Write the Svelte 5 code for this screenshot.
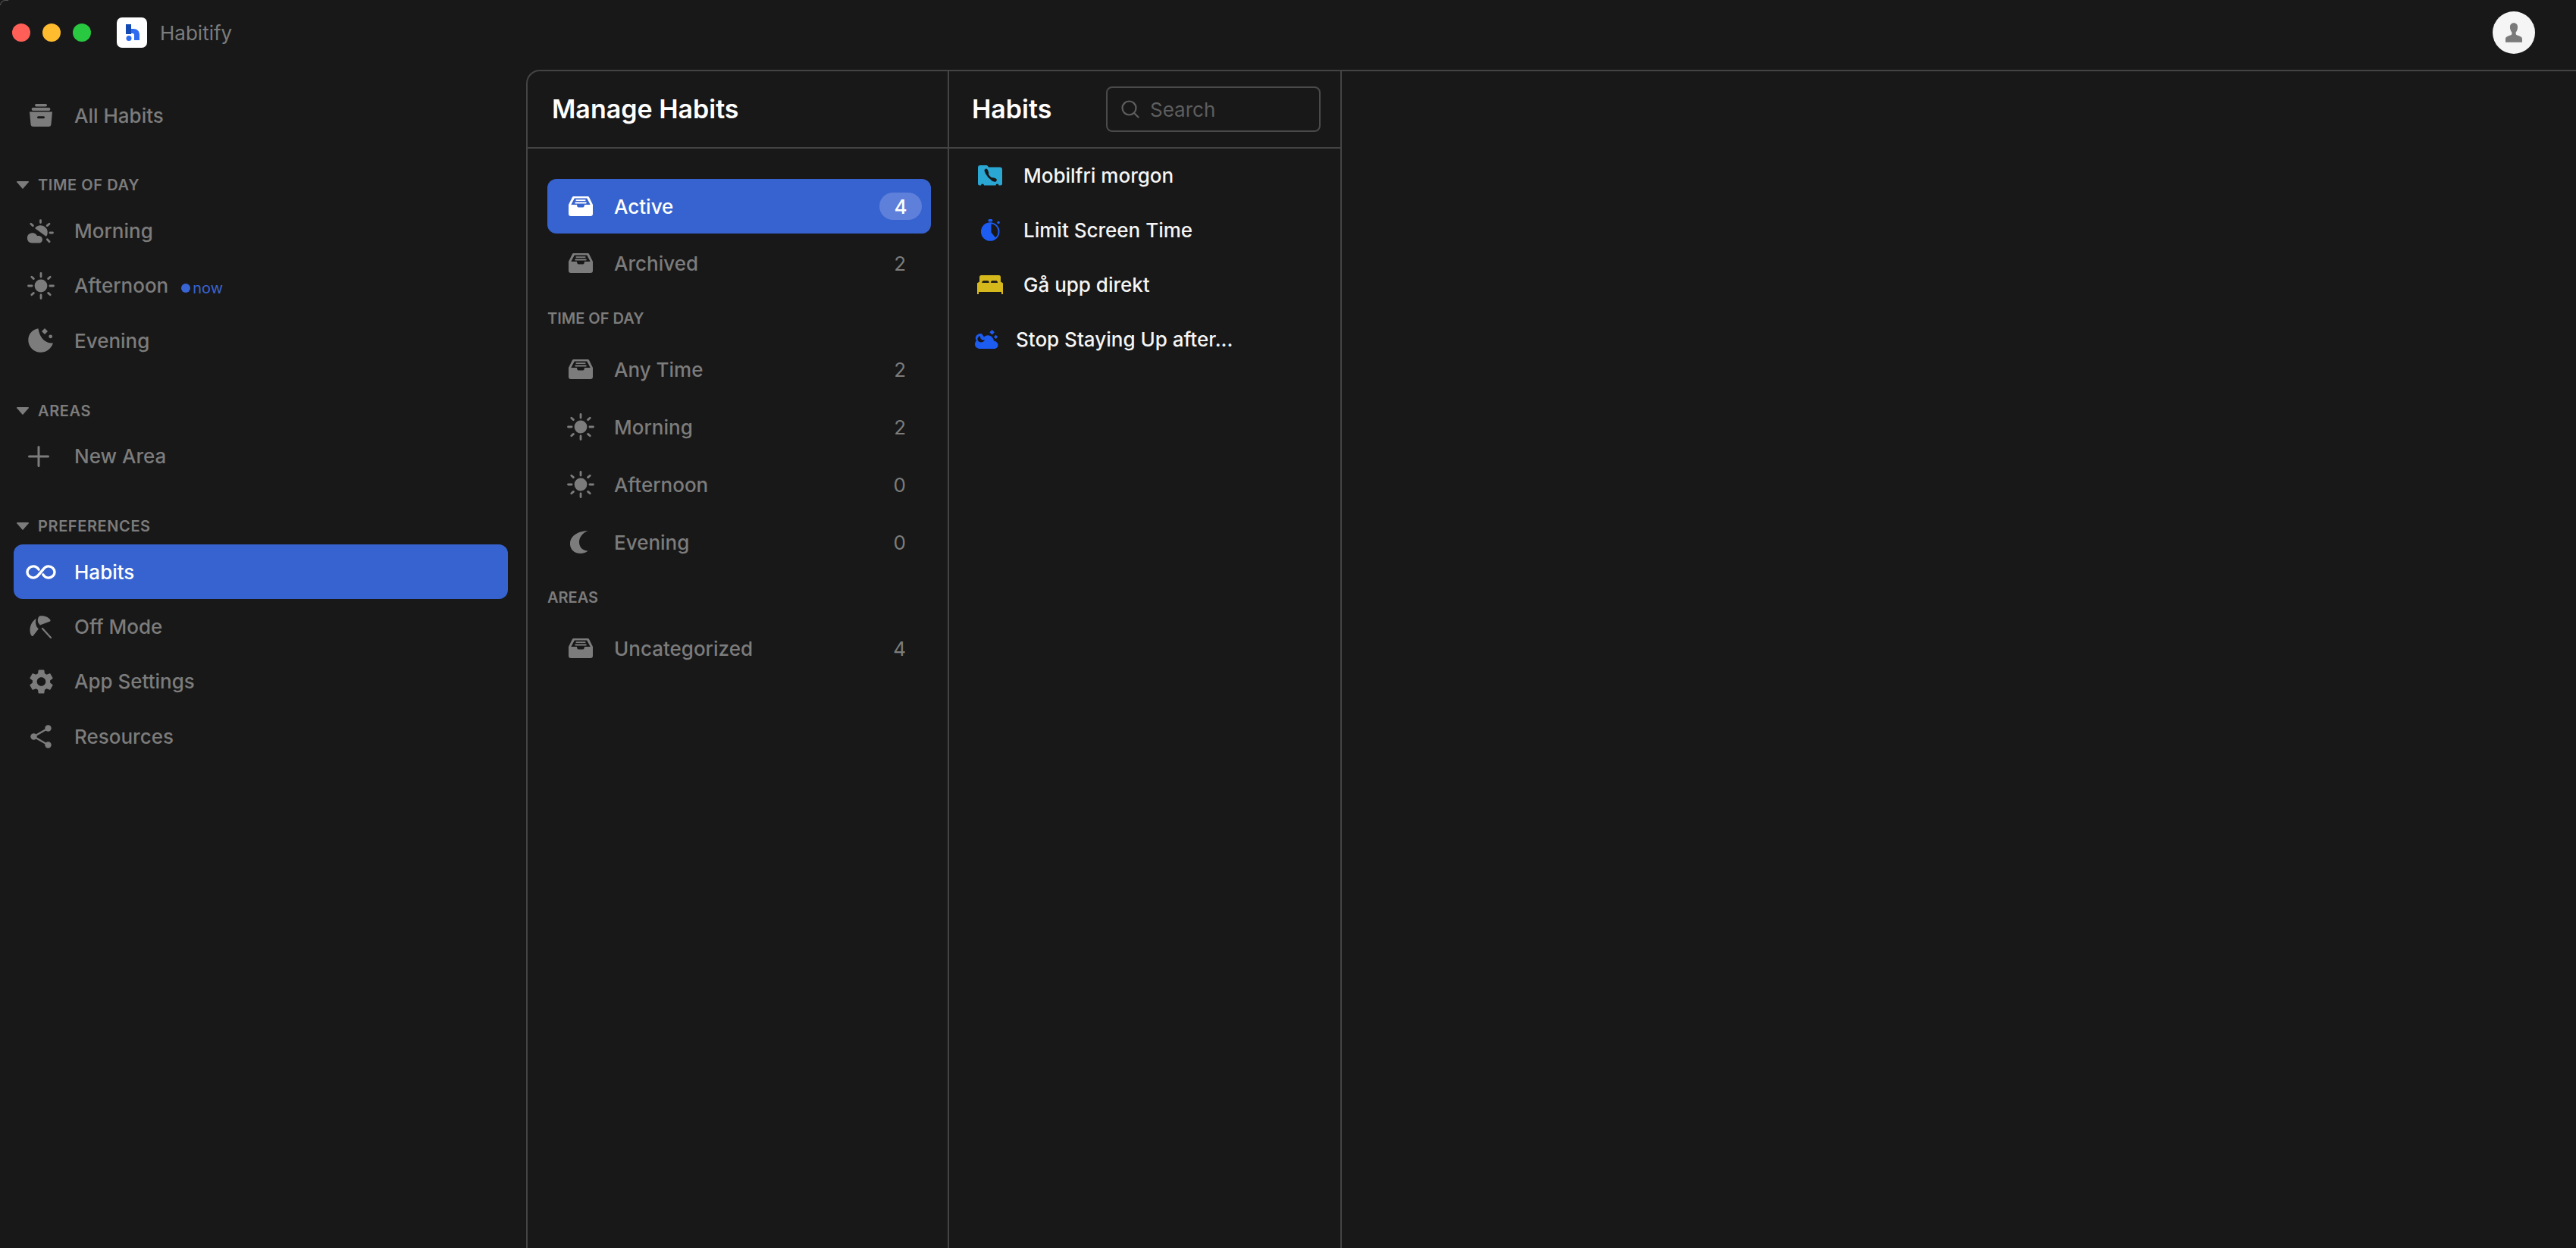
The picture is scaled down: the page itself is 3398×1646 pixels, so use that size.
<script>
  const timeRows = [
    { label: 'Any Time', icon: 'tray', count: 2 },
    { label: 'Morning', icon: 'sun', count: 2 },
    { label: 'Afternoon', icon: 'sun', count: 0 },
    { label: 'Evening', icon: 'moon', count: 0 }
  ];
</script>

{#snippet icon(name)}
  {#if name === 'archive'}
    <svg width="30" height="30" viewBox="0 0 30 30" fill="currentColor">
      <rect x="7" y="0" width="16" height="3.4" rx="1.7" />
      <rect x="2.6" y="5" width="24.8" height="4" rx="2" />
      <path fill-rule="evenodd" d="M0 10.5h30l-1.6 17a2.8 2.8 0 0 1-2.8 2.5H4.4a2.8 2.8 0 0 1-2.8-2.5zM11.5 16.2a1.5 1.5 0 0 0 0 3h7a1.5 1.5 0 0 0 0-3z" />
    </svg>
  {:else if name === 'sunrise'}
    <svg width="36" height="32" viewBox="0 0 36 32" fill="currentColor">
      <g stroke="currentColor" stroke-width="2.8" stroke-linecap="round" fill="none">
        <path d="M17.5 1.600v3M4.800 6.200l2.600 2.400M29 6.200l-2.800 2.400M30 18h3.500M26.300 26.800l2.800 3" />
      </g>
      <path d="M10 12A9.300 9.300 0 0 1 25 23Z" />
      <path d="M6 31.500a6.600 6.600 0 0 1-1-13c3.500-.8 6.500.5 8 3.500 4-.5 7 1.500 7 5 0 2.500-2 4.500-4.500 4.500z" />
    </svg>
  {:else if name === 'sun'}
    <svg width="36" height="36" viewBox="0 0 36 36" fill="currentColor">
      <circle cx="18" cy="18" r="8.4" />
      <g stroke="currentColor" stroke-width="2.8" stroke-linecap="round">
        <path d="M18 1.500v4.600M18 29.900v4.600M1.500 18h4.600M29.900 18h4.600M5.800 6.200l2.600 2.400M30.200 6.200l-2.600 2.400M5.800 29.800l2.600-2.400M30.200 29.800l-2.600-2.400" />
      </g>
    </svg>
  {:else if name === 'phase'}
    <svg width="34" height="33" viewBox="0 0 34 33" fill="currentColor">
      <path d="M13.500.3C5 2 .3 8 .3 15.500.3 24.500 7.500 31.800 16.500 31.800c7.500 0 14-4.800 16.500-12.300-9 1-17.500-5.500-19.500-19.200z" />
      <path d="M22 0l4 4-4 4-4-4z" />
      <circle cx="29.700" cy="10.800" r="2.400" />
    </svg>
  {:else if name === 'moon'}
    <svg width="28" height="30" viewBox="0 0 28 30" fill="currentColor">
      <path d="M23.500 0C12 .5 3 5 .5 13c-2.500 9 3.500 17 13 17 4 0 8-1.500 10-3.500-7 0-11.500-5-11.500-11.500C12 9 16 3 23.500 0z" />
    </svg>
  {:else if name === 'plus'}
    <svg class="plus" width="28" height="28" viewBox="0 0 28 28" fill="none" stroke="currentColor" stroke-width="3" stroke-linecap="round">
      <path d="M14 1.500v25M1.500 14h25" />
    </svg>
  {:else if name === 'infinity'}
    <svg width="40" height="19" viewBox="0 0 42 20" fill="none" stroke="currentColor" stroke-width="3.600" stroke-linecap="round">
      <path d="M18 6.500C16 3.500 13.500 2 10.500 2 5.800 2 2 5.600 2 10s3.800 8 8.500 8c3.500 0 5.800-2 8-5l5-6c2.200-3 4.500-5 8-5C36.200 2 40 5.600 40 10s-3.800 8-8.500 8c-3 0-5.500-1.500-7.500-4.500" />
    </svg>
  {:else if name === 'umbrella'}
    <svg width="30" height="30" viewBox="0 0 30 30" fill="currentColor">
      <path d="M13 .6c4-1.200 11.500.3 14.300 5 .6 1 .2 1.800-.8 2.100L13.800 12.500 11.200 9C10.400 5.800 10.800 2.800 13 .6z" />
      <path d="M8.800 3.800C7.500 7.500 7.800 11 9.400 14.400l2.400 3L4.800 26.500c-.5.700-1.300.8-1.900.2C-1.200 22.400-.5 9.500 8.800 3.800z" />
      <path d="M17 17l11 12" fill="none" stroke="currentColor" stroke-width="2.200" stroke-linecap="round" />
    </svg>
  {:else if name === 'gear'}
    <svg width="33" height="34" viewBox="2.400 1.500 19.200 21" fill="currentColor">
      <path d="M19.140 12.940c.04-.3.06-.61.06-.94 0-.32-.02-.64-.07-.94l2.030-1.580c.18-.14.23-.41.12-.61l-1.920-3.320c-.12-.22-.37-.29-.59-.22l-2.390.96c-.5-.38-1.030-.7-1.620-.94l-.36-2.540c-.04-.24-.24-.41-.48-.41h-3.840c-.24 0-.43.17-.47.41l-.36 2.540c-.59.24-1.130.57-1.620.94l-2.390-.96c-.22-.08-.47 0-.59.22L2.740 8.870c-.12.21-.08.47.12.61l2.030 1.580c-.05.3-.09.63-.09.94s.02.64.07.94l-2.030 1.580c-.18.14-.23.41-.12.61l1.920 3.320c.12.22.37.29.59.22l2.390-.96c.5.38 1.030.7 1.620.94l.36 2.540c.05.24.24.41.48.41h3.840c.24 0 .44-.17.47-.41l.36-2.540c.59-.24 1.130-.56 1.620-.94l2.390.96c.22.08.47 0 .59-.22l1.920-3.320c.12-.22.07-.47-.12-.61l-2.010-1.580zM12 15.600c-1.980 0-3.600-1.620-3.600-3.600s1.620-3.600 3.600-3.600 3.600 1.620 3.600 3.600-1.620 3.600-3.600 3.600z" />
    </svg>
  {:else if name === 'share'}
    <svg width="28" height="31" viewBox="0 0 28 31" fill="currentColor">
      <circle cx="23.500" cy="4.500" r="4.200" />
      <circle cx="4.500" cy="15.500" r="4.200" />
      <circle cx="23.500" cy="26.500" r="4.200" />
      <path d="M23.500 4.500L4.500 15.500l19 11" fill="none" stroke="currentColor" stroke-width="2.400" />
    </svg>
  {:else if name === 'tray'}
    <svg width="32" height="26" viewBox="0 0 32 26" fill="currentColor">
      <path fill-rule="evenodd" d="M7 0h18c1 0 1.800.5 2.300 1.400L32 11v12a3 3 0 0 1-3 3H3a3 3 0 0 1-3-3V11L4.700 1.400C5.200.5 6 0 7 0zm.8 2.400L3.300 11H11c0 2 .8 3.400 2 3.400h6c1.200 0 2-1.400 2-3.400h7.700L24.200 2.400z" />
      <rect x="9.400" y="4.200" width="13.200" height="1.800" rx=".9" />
      <rect x="8.300" y="7.600" width="15.400" height="1.800" rx=".9" />
    </svg>
  {:else if name === 'phone'}
    <svg width="32" height="27" viewBox="0 0 32 27" fill="#2aa7d3">
      <path d="M0 3a3 3 0 0 1 3-3h8c1 0 1.500.5 2 1l1 1.500h15a3 3 0 0 1 3 3V24a2.500 2.500 0 0 1-2.500 2.500h-2a2 2 0 0 0-4 0H8a2 2 0 0 0-4 0H2.500A2.500 2.500 0 0 1 0 24z" />
      <g fill="none" stroke="#181818" stroke-linecap="round">
        <path d="M11.500 8c.5 5.500 4.500 10 10.500 11.500" stroke-width="2.800" />
        <path d="M10.800 7l1.200 3" stroke-width="4.600" />
        <path d="M19.500 18.500l3 1" stroke-width="4.600" />
      </g>
    </svg>
  {:else if name === 'timer'}
    <svg width="25" height="29" viewBox="0 0 25 29" fill="#1d5cf0">
      <rect x="9.400" y="0" width="6" height="3.400" rx="1.700" />
      <circle cx="23" cy="4.500" r="1.800" />
      <path fill-rule="evenodd" d="M12.200 4.200a12.300 12.300 0 1 1 0 24.600 12.300 12.300 0 0 1 0-24.600zM13.500 6.300v11.200l5.500 6.700A10.300 10.300 0 0 0 13.500 6.300z" />
    </svg>
  {:else if name === 'bed'}
    <svg width="34" height="25" viewBox="0 0 34 25" fill="#d5b91c">
      <path d="M3 2.500A2.500 2.500 0 0 1 5.500 0h23A2.500 2.500 0 0 1 31 2.500V8.500l3 2V22H0V10.500l3-2z" />
      <rect x="0" y="22" width="2" height="3" />
      <rect x="32" y="22" width="2" height="3" />
      <path d="M6.300 10c0-1.700 1-2.700 2.400-2.700h5.200c1.200 0 1.800 1 1.800 2.700zM18 10c0-1.700.7-2.700 1.900-2.700h5.200c1.400 0 1.900 1 1.900 2.700z" fill="#181818" />
    </svg>
  {:else if name === 'cloudmoon'}
    <svg width="31" height="25" viewBox="0 0 31 25" fill="#1d5cf0">
      <path d="M22.600 0l3.300 3.300-3.300 3.300-3.300-3.300z" />
      <path d="M27.600 6.700l2.600 2.600-2.600 2.600-2.600-2.600z" />
      <path fill-rule="evenodd" d="M7 25c-4 0-7-2.500-7-6 0-2 .8-3.500 2-4.500-1-1.500-1.500-3.500-1-5C2 6.500 4.500 5 7.500 5c1.500 0 2 .5 2.500 1.500l2 3c1.500-1.500 4-2.500 6.500-2 3.500.5 6 3.500 6.500 7 3 .5 5.500 3 5.500 5.500 0 3-2.500 5-5.500 5zM7 8c-3.500 1-4.500 4.500-2.500 7 2.500 2.500 7 1.500 8.500-1.500C9 14 6.500 11.500 7 8z" />
    </svg>
  {/if}
{/snippet}

{#snippet navRow(name, label, active = false)}
  <div class="nav-row" class:active>
    <span class="nav-icon">{@render icon(name)}</span>
    <span>{label}</span>
  </div>
{/snippet}

{#snippet navHead(label)}
  <div class="nav-head">
    <svg width="16" height="10" viewBox="0 0 16 10" fill="currentColor"><path d="M.8 0h14.400c.6 0 1 .7.6 1.200L8.600 9.600a.8.8 0 0 1-1.200 0L.2 1.200C-.2.700.2 0 .8 0z" /></svg>
    <span>{label}</span>
  </div>
{/snippet}

{#snippet countRow(name, label, count)}
  <div class="count-row">
    <span class="count-icon">{@render icon(name)}</span>
    <span class="count-label">{label}</span>
    <span class="count">{count}</span>
  </div>
{/snippet}

<div class="window">
  <header class="titlebar">
    <div class="lights">
      <span class="light red"></span>
      <span class="light yellow"></span>
      <span class="light green"></span>
    </div>
    <div class="logo">
      <svg width="40" height="40" viewBox="0 0 40 40">
        <path d="M12 9h7v13h-7z" fill="#1249b4" />
        <path d="M19 15h3c5 0 8 3 8 8v7h-7v-7c0-1.300-.8-2-2-2h-2z" fill="#2f6bf0" />
        <circle cx="16" cy="27.500" r="3.500" fill="#2f6bf0" />
      </svg>
    </div>
    <span class="app-name">Habitify</span>
    <div class="avatar">
      <svg width="22" height="26" viewBox="0 0 24 28" fill="#7a7a7a">
        <path d="M12 0c3.500 0 5.500 2.500 5.500 6 0 3-1 5.500-2.600 7.500v2.200c0 1 .6 1.600 2.600 2.300 3.500 1.100 6.500 2 6.500 5V28H0v-5c0-3 3-3.900 6.500-5 2-.7 2.600-1.300 2.600-2.300v-2.200C7.500 11.500 6.500 9 6.500 6 6.500 2.500 8.500 0 12 0z" />
      </svg>
    </div>
  </header>

  <div class="body">
    <nav class="sidebar">
      {@render navRow('archive', 'All Habits')}

      {@render navHead('TIME OF DAY')}
      {@render navRow('sunrise', 'Morning')}
      <div class="nav-row">
        <span class="nav-icon">{@render icon('sun')}</span>
        <span>Afternoon</span>
        <span class="now"><i></i>now</span>
      </div>
      {@render navRow('phase', 'Evening')}

      {@render navHead('AREAS')}
      {@render navRow('plus', 'New Area')}

      {@render navHead('PREFERENCES')}
      {@render navRow('infinity', 'Habits', true)}
      {@render navRow('umbrella', 'Off Mode')}
      {@render navRow('gear', 'App Settings')}
      {@render navRow('share', 'Resources')}
    </nav>

    <main class="panel">
      <section class="manage">
        <div class="col-head"><h1>Manage Habits</h1></div>
        <div class="manage-list">
          <div class="count-row selected">
            <span class="count-icon">{@render icon('tray')}</span>
            <span class="count-label">Active</span>
            <span class="badge">4</span>
          </div>
          {@render countRow('tray', 'Archived', 2)}

          <div class="group-label">TIME OF DAY</div>
          {#each timeRows as row}
            {@render countRow(row.icon, row.label, row.count)}
          {/each}

          <div class="group-label">AREAS</div>
          {@render countRow('tray', 'Uncategorized', 4)}
        </div>
      </section>

      <section class="habits">
        <div class="col-head habits-head">
          <h2>Habits</h2>
          <div class="search">
            <svg width="24" height="24" viewBox="0 0 24 24" fill="none" stroke="currentColor" stroke-width="2.200" stroke-linecap="round">
              <circle cx="10.500" cy="10.500" r="9" />
              <path d="M17.500 17.500l5 5" />
            </svg>
            <span>Search</span>
          </div>
        </div>
        <div class="habit-row"><span class="habit-icon">{@render icon('phone')}</span>Mobilfri morgon</div>
        <div class="habit-row"><span class="habit-icon">{@render icon('timer')}</span>Limit Screen Time</div>
        <div class="habit-row"><span class="habit-icon">{@render icon('bed')}</span>Gå upp direkt</div>
        <div class="habit-row shifted"><span class="habit-icon">{@render icon('cloudmoon')}</span>Stop Staying Up after...</div>
      </section>
    </main>
  </div>
</div>

<style>
  :global(body) {
    margin: 0;
    background: #181818;
  }

  .window {
    height: 100vh;
    display: flex;
    flex-direction: column;
    overflow: hidden;
    position: relative;
    background: #181818;
    color: #7c7c7c;
    font-family: Inter, "Liberation Sans", sans-serif;
    font-size: 26px;
    font-weight: 500;
  }

  /* faint window corner */
  .window::before {
    content: "";
    position: absolute;
    top: 0;
    left: 0;
    width: 10px;
    height: 6px;
    border-top: 1px solid #555;
    border-left: 1px solid #555;
    border-top-left-radius: 10px;
    border-right: 0;
    border-bottom: 0;
  }

  .titlebar {
    height: 92px;
    flex: none;
    display: flex;
    align-items: center;
    padding: 0 54px 6px 16px;
    box-sizing: border-box;
  }

  .lights {
    display: flex;
    gap: 16px;
    margin-right: 34px;
  }

  .light {
    width: 24px;
    height: 24px;
    border-radius: 50%;
  }

  .red { background: #ff5f57; }
  .yellow { background: #febc2e; }
  .green { background: #28c840; }

  .logo {
    width: 40px;
    height: 40px;
    border-radius: 7px;
    background: #fff;
    margin-right: 17px;
  }

  .logo svg,
  .avatar svg {
    display: block;
  }

  .app-name {
    font-weight: 400;
  }

  .avatar {
    width: 56px;
    height: 56px;
    margin-left: auto;
    border-radius: 50%;
    background: #f5f5f5;
    display: flex;
    align-items: center;
    justify-content: center;
  }

  .body {
    flex: 1;
    min-height: 0;
    display: flex;
  }

  .sidebar {
    width: 694px;
    flex: none;
    box-sizing: border-box;
    padding: 24px 24px 0 18px;
  }

  .nav-row {
    height: 72.4px;
    display: flex;
    align-items: center;
    padding-left: 16px;
    border-radius: 12px;
  }

  .nav-row.active {
    background: #3663cf;
    color: #fff;
  }

  .nav-icon {
    width: 40px;
    height: 40px;
    margin-right: 24px;
    display: flex;
    align-items: center;
    justify-content: center;
    flex: none;
  }

  .plus {
    margin-right: 7px;
  }

  .nav-head {
    height: 30px;
    margin: 41px 0 9px;
    padding-left: 4px;
    display: flex;
    align-items: center;
    gap: 12px;
    font-size: 20px;
    font-weight: 600;
    letter-spacing: 0.6px;
  }

  .now {
    margin-left: 17px;
    display: inline-flex;
    align-items: center;
    gap: 3px;
    color: #3864d4;
    font-size: 20px;
    font-weight: 400;
    position: relative;
    top: 3px;
  }

  .now i {
    width: 12px;
    height: 12px;
    border-radius: 50%;
    background: #3864d4;
  }

  .panel {
    flex: 1;
    display: flex;
    border-top: 2px solid #444;
    border-left: 2px solid #444;
    border-top-left-radius: 18px;
    min-width: 0;
  }

  .manage {
    width: 556px;
    flex: none;
    box-sizing: border-box;
    border-right: 2px solid #444;
  }

  .habits {
    width: 518px;
    flex: none;
    box-sizing: border-box;
    border-right: 2px solid #444;
  }

  .col-head {
    height: 102px;
    box-sizing: border-box;
    border-bottom: 2px solid #444;
    display: flex;
    align-items: center;
    padding-left: 32px;
  }

  h1,
  h2 {
    margin: 0;
    color: #fff;
    font-size: 34px;
    font-weight: 600;
    position: relative;
    top: -1px;
  }

  .habits-head {
    justify-content: space-between;
    padding: 0 26px 0 30px;
  }

  .search {
    width: 283px;
    height: 60px;
    box-sizing: border-box;
    border: 2px solid #4a4a4a;
    border-radius: 8px;
    display: flex;
    align-items: center;
    gap: 14px;
    padding-left: 18px;
    color: #5e5e5e;
    font-weight: 400;
  }

  .manage-list {
    padding: 40px 22px 0 26px;
  }

  .count-row {
    height: 72px;
    margin-bottom: 4px;
    display: flex;
    align-items: center;
    padding: 0 33px 0 24px;
    border-radius: 12px;
  }

  .count-row.selected {
    margin-bottom: 3px;
    background: #3663cf;
    color: #fff;
  }

  .count-icon {
    width: 40px;
    height: 40px;
    margin-right: 24px;
    display: flex;
    align-items: center;
    justify-content: center;
    flex: none;
  }

  .count-label {
    flex: 1;
  }

  .count {
    font-weight: 400;
  }

  .badge {
    width: 56px;
    height: 36px;
    margin-right: -21px;
    border-radius: 18px;
    background: #5e80da;
    display: flex;
    align-items: center;
    justify-content: center;
  }

  .group-label {
    height: 30px;
    margin: 22px 0 16px;
    display: flex;
    align-items: center;
    font-size: 20px;
    font-weight: 600;
  }

  .habit-row {
    height: 72px;
    display: flex;
    align-items: center;
    padding-left: 34px;
    color: #f5f5f5;
    position: relative;
    top: -1px;
  }

  .habit-icon {
    width: 40px;
    height: 40px;
    margin-right: 24px;
    display: flex;
    align-items: center;
    justify-content: center;
    flex: none;
  }

  .habit-row.shifted {
    padding-left: 29px;
  }

  .shifted .habit-icon {
    margin-right: 19px;
  }
</style>
